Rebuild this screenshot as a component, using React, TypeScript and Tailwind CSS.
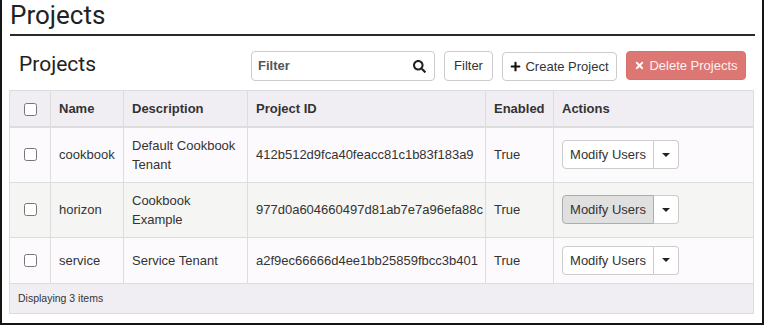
import { FaSearch, FaPlus, FaTimes } from "react-icons/fa";

type Project = {
    name: string;
    description: string[];
    id: string;
    enabled: string;
};

const projects: Project[] = [
    { name: "cookbook", description: ["Default Cookbook", "Tenant"], id: "412b512d9fca40feacc81c1b83f183a9", enabled: "True" },
    { name: "horizon", description: ["Cookbook", "Example"], id: "977d0a604660497d81ab7e7a96efa88c", enabled: "True" },
    { name: "service", description: ["Service Tenant"], id: "a2f9ec66666d4ee1bb25859fbcc3b401", enabled: "True" },
];

function Caret() {
    return <span className="inline-block w-0 h-0 border-x-[4px] border-x-transparent border-t-[4px] border-t-[#222]" />;
}

function ActionButton({ active }: { active?: boolean }) {
    return (
        <div className="inline-flex h-[29px] align-middle">
            <button
                className={`w-[92px] h-full border rounded-l-[4px] text-[13px] text-[#333] ${active ? "bg-[#e0e0e0] border-[#adadad]" : "bg-white border-[#ccc]"}`}
            >
                Modify Users
            </button>
            <button className="w-[25px] h-full border border-l-0 border-[#ccc] rounded-r-[4px] bg-white flex items-center justify-center">
                <Caret />
            </button>
        </div>
    );
}

export default function App() {
    return (
        <div
            className="w-[764px] h-[325px] border-x-2 border-b-2 border-[#151515] bg-white pl-[7px] pr-[7px] text-[#333] overflow-hidden"
            style={{ fontFamily: '"Liberation Sans", Arial, sans-serif' }}
        >
            <div className="ml-px pt-[2px] pb-[6px] border-b-2 border-[#2a2a2a]">
                <h1 className="text-[26px] leading-[26px] text-[#222]" style={{ fontFamily: 'Roboto, "Noto Sans", sans-serif' }}>
                    Projects
                </h1>
            </div>

            <div className="mt-[15px] flex items-start pr-[9px]">
                <h2 className="pl-[10px] text-[21px] leading-[26px] text-[#222]" style={{ fontFamily: 'Roboto, "Noto Sans", sans-serif' }}>
                    Projects
                </h2>
                <div className="ml-auto flex gap-[9px]">
                    <div className="w-[184px] h-[30px] border border-[#ccc] rounded-[4px] flex items-center pl-[6px] pr-[8px]">
                        <span className="flex-1 text-[13px] font-bold text-[#555]">Filter</span>
                        <FaSearch className="w-[13px] h-[13px] text-[#222]" />
                    </div>
                    <button className="w-[49px] h-[30px] border border-[#ccc] rounded-[4px] text-[13px] text-[#333] bg-white">Filter</button>
                    <button className="w-[115px] h-[29px] mt-px border border-[#ccc] rounded-[4px] text-[13px] text-[#333] bg-white flex items-center justify-center gap-[4px]">
                        <FaPlus className="w-[11px] h-[11px] text-[#111]" />
                        Create Project
                    </button>
                    <button className="w-[120px] h-[29px] border border-[#da6f6b] rounded-[4px] text-[13px] text-[#fdf0f0] bg-[#dd7773] flex items-center justify-center gap-[4px]">
                        <FaTimes className="w-[11px] h-[11px] text-white" />
                        Delete Projects
                    </button>
                </div>
            </div>

            <table className="mt-[9px] w-[745px] border-collapse border border-[#ddd] text-[13px] leading-[19px] table-fixed">
                <colgroup>
                    <col className="w-[41px]" />
                    <col className="w-[73px]" />
                    <col className="w-[124px]" />
                    <col className="w-[238px]" />
                    <col className="w-[68px]" />
                    <col />
                </colgroup>
                <thead>
                    <tr className="bg-[#f1eef3] h-[36px]">
                        <th className="border border-[#ddd] border-b-2 px-2 text-center align-middle">
                            <input type="checkbox" className="align-middle m-0" />
                        </th>
                        <th className="border border-[#ddd] border-b-2 px-2 text-left font-bold">Name</th>
                        <th className="border border-[#ddd] border-b-2 px-2 text-left font-bold">Description</th>
                        <th className="border border-[#ddd] border-b-2 px-2 text-left font-bold">Project ID</th>
                        <th className="border border-[#ddd] border-b-2 px-2 text-left font-bold">Enabled</th>
                        <th className="border border-[#ddd] border-b-2 px-2 text-left font-bold">Actions</th>
                    </tr>
                </thead>
                <tbody>
                    {projects.map((p, i) => (
                        <tr key={p.id} className={i % 2 === 1 ? "bg-[#f5f5f3]" : "bg-[#fdfafd]"}>
                            <td className="border border-[#ddd] px-2 py-2 text-center align-middle">
                                <input type="checkbox" className="align-middle m-0 -mt-[2px]" />
                            </td>
                            <td className="border border-[#ddd] px-2 py-2">{p.name}</td>
                            <td className="border border-[#ddd] px-2 py-2">
                                {p.description.map((d) => (
                                    <div key={d}>{d}</div>
                                ))}
                            </td>
                            <td className="border border-[#ddd] px-2 py-2">{p.id}</td>
                            <td className="border border-[#ddd] px-2 py-2">{p.enabled}</td>
                            <td className="border border-[#ddd] px-2 py-2">
                                <ActionButton active={i === 1} />
                            </td>
                        </tr>
                    ))}
                </tbody>
                <tfoot>
                    <tr className="bg-[#f1eef3] h-[30px]">
                        <td colSpan={6} className="border border-[#ddd] px-2 text-[10.5px]">
                            Displaying 3 items
                        </td>
                    </tr>
                </tfoot>
            </table>
        </div>
    );
}
